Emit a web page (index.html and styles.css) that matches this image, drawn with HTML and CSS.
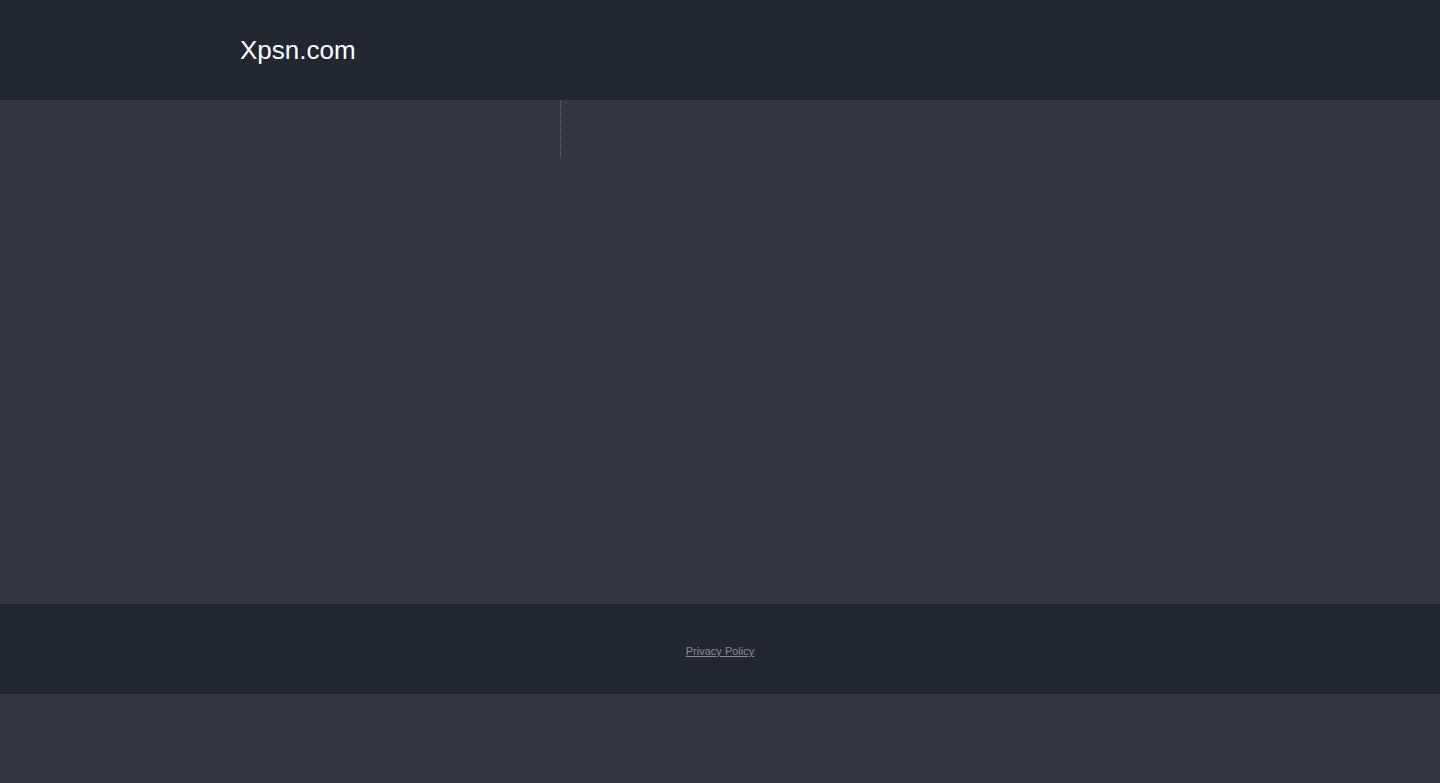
FILE: index.html
```html
<!DOCTYPE html>
<html lang="en">
<head>
  <meta charset="UTF-8" />
  <title>Xpsn.com</title>
  <link rel="stylesheet" href="styles.css">
</head>
<body>

  <!-- Header -->
  <div class="header">
    <div class="container">
      <a class="logo" href="#">Xpsn.com</a>
    </div>
  </div>

  <!-- Main content -->
  <div class="main">
    <div class="container columns">
      <div class="col-left"></div>
      <div class="col-right"></div>
    </div>
  </div>

  <!-- Footer -->
  <div class="footer">
    <a href="#">Privacy Policy</a>
  </div>

</body>
</html>
```

FILE: styles.css
```css
body {
  margin: 0;
  font-family: Arial, "Liberation Sans", sans-serif;
  background-color: #343741;
}
.container {
  width: 960px;
  margin: 0 auto;
}
.header {
  background-color: #222734;
  height: 100px;
}
.header .container {
  display: flex;
  align-items: center;
  height: 100%;
}
.logo {
  color: #fff;
  font-size: 26px;
  text-decoration: none;
}
.main {
  height: 504px;
  background-color: #343741;
}
.columns {
  display: flex;
}
.col-left {
  width: 320px;
  height: 57px;
  border-right: 1px dotted #6d717b;
}
.col-right {
  flex: 1;
}
.footer {
  background-color: #222734;
  height: 90px;
  padding-top: 4px;
  box-sizing: border-box;
  display: flex;
  align-items: center;
  justify-content: center;
}
.footer a {
  color: #8a8d95;
  font-size: 11px;
}
```
